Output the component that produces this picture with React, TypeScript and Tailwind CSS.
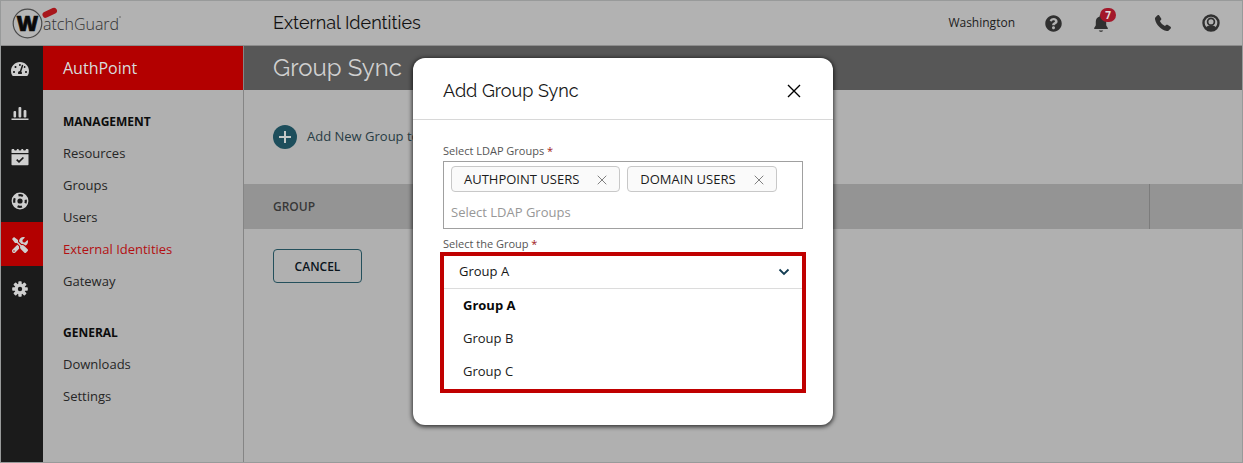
import { useState } from "react";
import type { ReactNode } from "react";
import { FaTachometerAlt, FaQuestionCircle, FaTools } from "react-icons/fa";

function Logo() {
  return (
    <svg viewBox="0 0 116 36" className="h-9 w-[116px]" role="img" aria-label="WatchGuard">
      <circle cx="16.500" cy="18.500" r="14.300" fill="#b6b6b6" stroke="#4a4a4a" strokeWidth="1.200" />
      <text x="5.500" y="26" fontFamily="Open Sans, sans-serif" fontWeight="800" fontSize="21" fill="#0a0a0a" stroke="#0a0a0a" strokeWidth="0.600">
        W
      </text>
      <path d="M34.500 9.800 L43 5.800" stroke="#a8161b" strokeWidth="6" strokeLinecap="round" />
      <text x="32" y="24.500" fontFamily="Open Sans, sans-serif" fontSize="16" fontWeight="300" fill="#333">
        atchGuard
      </text>
      <circle cx="109" cy="12" r="0.700" fill="#4a4a4a" />
    </svg>
  );
}

function BarsIcon() {
  return (
    <svg viewBox="0 0 18 18" className="size-[18px]" fill="currentColor" aria-hidden="true">
      <rect x="0.500" y="14.500" width="17" height="1.500" />
      <rect x="2.500" y="7" width="2.600" height="6.500" rx="1" />
      <rect x="7.500" y="3" width="2.800" height="10.500" rx="1" />
      <rect x="12.600" y="6" width="2.800" height="7.500" rx="1" />
    </svg>
  );
}

function CalendarIcon() {
  return (
    <svg viewBox="0 0 18 18" className="size-[18px]" aria-hidden="true">
      <path
        d="M1.500 1H3a1.500 1.500 0 0 0 3 0h1.500a1.500 1.500 0 0 0 3 0H12a1.500 1.500 0 0 0 3 0h1.500a1 1 0 0 1 1 1v3H.5V2a1 1 0 0 1 1-1z"
        fill="currentColor"
      />
      <path d="M.5 6.300h17V16.500a.8.800 0 0 1-.8.800H1.300a.8.800 0 0 1-.8-.8z" fill="currentColor" />
      <path d="M5.700 11.700l2.300 2.200 4.400-4.400" fill="none" stroke="#1b1b1b" strokeWidth="1.700" />
    </svg>
  );
}

function RingIcon() {
  return (
    <svg viewBox="0 0 18 18" className="size-[18px]" fill="none" aria-hidden="true">
      <circle cx="9" cy="9" r="5.500" stroke="currentColor" strokeWidth="5.800" />
      <circle
        cx="9"
        cy="9"
        r="5.800"
        stroke="#1b1b1b"
        strokeWidth="2.200"
        strokeDasharray="4.600 4.511"
        strokeDashoffset="2.300"
      />
    </svg>
  );
}

function GearIcon() {
  return (
    <svg viewBox="0 0 18 18" className="size-[18px]" aria-hidden="true">
      <g fill="currentColor">
        {[0, 45, 90, 135].map((angle) => (
          <rect key={angle} x="7.300" y="1.200" width="3.400" height="15.600" rx="0.800" transform={`rotate(${angle} 9 9)`} />
        ))}
        <circle cx="9" cy="9" r="5.400" />
      </g>
      <circle cx="9" cy="9" r="2.200" fill="#1b1b1b" />
    </svg>
  );
}

function BellIcon() {
  return (
    <svg viewBox="0 0 18 20" className="h-5 w-[18px]" fill="currentColor" aria-hidden="true">
      <path d="M9 1.500a1.300 1.300 0 0 1 1.300 1.300v.6c2.400.6 3.900 2.600 3.900 5.100v3.800c0 .7 1.600 2 1.600 3v.7H2.200v-.7c0-1 1.600-2.300 1.600-3V8.500c0-2.500 1.500-4.500 3.900-5.100v-.6A1.300 1.300 0 0 1 9 1.500z" />
      <path d="M6.800 17.400h4.400c-.3.900-1.200 1.300-2.200 1.300s-1.900-.4-2.200-1.300z" />
    </svg>
  );
}

function PhoneIcon() {
  return (
    <svg viewBox="0 0 18 18" className="size-[18px]" fill="currentColor" aria-hidden="true">
      <path d="M1.500 3.300 3.600 1.300c.5-.4 1.200-.3 1.600.2l2 3c.3.500.2 1.100-.2 1.500L5.900 7c.9 2 2.900 4 5.100 5.100l1-1.100c.4-.4 1-.5 1.500-.2l3 2c.5.4.6 1.100.2 1.600l-2 2.100c-.5.500-1.200.7-1.900.5C6.900 15.600 2.400 11.100 1 5.200c-.2-.7 0-1.400.5-1.900z" />
    </svg>
  );
}

function UserIcon() {
  return (
    <svg viewBox="0 0 18 18" className="size-[18px]" fill="none" aria-hidden="true">
      <circle cx="9" cy="9" r="7.500" stroke="currentColor" strokeWidth="2.400" />
      <circle cx="9" cy="7.700" r="3.400" stroke="currentColor" strokeWidth="1.700" />
      <path d="M3.600 14.200c1-2.200 3-2.700 5.400-2.700s4.400.5 5.400 2.700L12 16.500H6z" fill="currentColor" />
    </svg>
  );
}

function CrossIcon({ className }: { className: string }) {
  return (
    <svg viewBox="0 0 14 14" className={className} stroke="currentColor" strokeWidth="1.400" aria-hidden="true">
      <path d="M1 1 L13 13 M13 1 L1 13" />
    </svg>
  );
}

const rail: { label: string; icon: ReactNode; active?: boolean }[] = [
  { label: "Dashboard", icon: <FaTachometerAlt className="size-[18px]" /> },
  { label: "Monitor", icon: <BarsIcon /> },
  { label: "Schedule", icon: <CalendarIcon /> },
  { label: "Support", icon: <RingIcon /> },
  { label: "Configure", icon: <FaTools className="size-4" />, active: true },
  { label: "Settings", icon: <GearIcon /> },
];

const menu = [
  { title: "MANAGEMENT", items: ["Resources", "Groups", "Users", "External Identities", "Gateway"] },
  { title: "GENERAL", items: ["Downloads", "Settings"] },
];

const groups = ["Group A", "Group B", "Group C"];

function Header() {
  return (
    <header className="flex h-[45px] items-center border-b border-[#8c8c8c] bg-[#b2b2b2]">
      <a href="#home" className="w-[272px] pl-[10px]">
        <Logo />
      </a>
      <h1 className="grow font-[Raleway,Lato,sans-serif] text-lg font-normal text-[#111]">External Identities</h1>
      <div className="flex items-center pr-[22px] text-[#303030]">
        <span className="mr-[30px] text-[12px] text-[#1c1c1c]">Washington</span>
        <button type="button" aria-label="Help" className="mr-[30px]">
          <FaQuestionCircle className="size-[17px]" />
        </button>
        <button type="button" aria-label="Notifications" className="relative mr-[44px]">
          <BellIcon />
          <span className="absolute -top-[5px] left-2 flex h-[14px] w-4 items-center justify-center rounded-full bg-[#a3182a] text-[10px] font-bold text-[#e0e0e0]">
            7
          </span>
        </button>
        <button type="button" aria-label="Phone" className="mr-[30px]">
          <PhoneIcon />
        </button>
        <button type="button" aria-label="Account">
          <UserIcon />
        </button>
      </div>
    </header>
  );
}

function Sidebar() {
  return (
    <>
      <nav aria-label="Sections" className="flex w-[42px] shrink-0 flex-col bg-[#1b1b1b] text-[#cfcfcf]">
        {rail.map((item) => (
          <button
            key={item.label}
            type="button"
            aria-label={item.label}
            className={`flex h-11 items-center justify-center pt-0.5 pr-1 ${item.active ? "bg-[#b30000]" : ""}`}
          >
            {item.icon}
          </button>
        ))}
      </nav>
      <nav aria-label="AuthPoint" className="w-[201px] shrink-0 border-r border-[#858585] bg-[#b0b0b0]">
        <h2 className="flex h-11 items-center bg-[#b30000] pl-5 text-base text-[#d8dcdc]">AuthPoint</h2>
        <div className="flex flex-col gap-5 pt-4 pl-5">
          {menu.map((section) => (
            <section key={section.title}>
              <h3 className="text-[12px] leading-[31px] font-bold text-[#0c0c0c]">{section.title}</h3>
              <ul>
                {section.items.map((item) => (
                  <li key={item} className="text-[13px] leading-8">
                    <a href="#menu" className={item === "External Identities" ? "text-[#b30f12]" : "text-[#262626]"}>
                      {item}
                    </a>
                  </li>
                ))}
              </ul>
            </section>
          ))}
        </div>
      </nav>
    </>
  );
}

function GroupSync() {
  return (
    <main className="min-w-0 grow bg-[#b0b0b0]">
      <h2 className="flex h-11 items-center bg-[#575757] pl-[29px] font-[Raleway,Lato,sans-serif] text-2xl text-[#d0d0d0]">
        Group Sync
      </h2>
      <button type="button" className="mt-[35px] ml-[29px] flex items-center gap-[10px] text-[13px] text-[#283c44]">
        <svg viewBox="0 0 24 24" className="size-6" aria-hidden="true">
          <circle cx="12" cy="12" r="12" fill="#1d4e5c" />
          <path d="M12 6v12M6 12h12" stroke="#c4c8c8" strokeWidth="2" />
        </svg>
        Add New Group to Sync
      </button>
      <table className="mt-[35px] w-full bg-[#949494] text-left">
        <thead>
          <tr className="h-[45px]">
            <th scope="col" className="pl-[29px] text-[12px] font-semibold text-[#383838]">
              GROUP
            </th>
            <td className="w-[93px] border-l border-[#7c7c7c]" />
          </tr>
        </thead>
      </table>
      <button
        type="button"
        className="mt-5 ml-[29px] h-[34px] min-w-[89px] rounded border border-[#24505c] px-5 pt-px text-[12px] font-semibold text-[#0a141c]"
      >
        CANCEL
      </button>
    </main>
  );
}

function GroupSyncDialog() {
  const [chips, setChips] = useState(["AUTHPOINT USERS", "DOMAIN USERS"]);
  const [selected, setSelected] = useState("Group A");

  return (
    <div
      role="dialog"
      aria-labelledby="dialog-title"
      className="w-full max-w-[420px] rounded-xl bg-white pb-8 shadow-[0_1px_4px_1px_rgba(0,0,0,0.7)]"
    >
      <div className="flex h-[62px] items-center justify-between border-b border-[#d8d8d8] pt-1 pr-8 pl-[30px]">
        <h2 id="dialog-title" className="font-[Raleway,Lato,sans-serif] text-lg text-[#161616]">
          Add Group Sync
        </h2>
        <button type="button" aria-label="Close" className="text-black">
          <CrossIcon className="size-[14px]" />
        </button>
      </div>
      <div className="px-[30px] pt-[21px]">
        <label htmlFor="ldap" className="block h-5 text-[11px] leading-5 text-[#555]">
          Select LDAP Groups <span className="text-[#a01818]">*</span>
        </label>
        <div className="border border-[#a0a0a0] px-[7px] pt-1 pb-[3px]">
          <div className="flex flex-wrap gap-[7px]">
            {chips.map((chip) => (
              <span
                key={chip}
                className="flex h-[26px] items-center rounded border border-[#c8c8c8] bg-[#fafafa] px-3 pt-px text-[13px] text-[#1c1c1c]"
              >
                {chip}
                <button
                  type="button"
                  aria-label={`Remove ${chip}`}
                  className="ml-[18px] text-[#808080]"
                  onClick={() => setChips(chips.filter((c) => c !== chip))}
                >
                  <CrossIcon className="size-[10px]" />
                </button>
              </span>
            ))}
          </div>
          <input
            id="ldap"
            type="text"
            placeholder="Select LDAP Groups"
            className="mt-1.5 block h-[27px] w-full text-[13px] outline-none placeholder:text-[#979797]"
          />
        </div>
        <label htmlFor="group" className="mt-[7px] block h-4 text-[11px] leading-4 text-[#555]">
          Select the Group <span className="text-[#a01818]">*</span>
        </label>
        <div className="-mx-[3px] border-4 border-[#c00000]">
          <div className="grid items-center border-b border-[#dcdcdc]">
            <select
              id="group"
              value={selected}
              onChange={(e) => setSelected(e.target.value)}
              className="col-start-1 row-start-1 h-8 w-full appearance-none bg-transparent pl-[15px] text-[13px] text-[#161616] outline-none"
            >
              {groups.map((group) => (
                <option key={group}>{group}</option>
              ))}
            </select>
            <svg
              viewBox="0 0 12 8"
              className="pointer-events-none col-start-1 row-start-1 mr-3 h-2 w-3 justify-self-end"
              fill="none"
              stroke="#123c52"
              strokeWidth="1.800"
              aria-hidden="true"
            >
              <path d="M1.500 1.500 6 6l4.500-4.500" />
            </svg>
          </div>
          <ul role="listbox" aria-label="Groups" className="pb-px">
            {groups.map((group) => (
              <li key={group} role="option" aria-selected={group === selected}>
                <button
                  type="button"
                  onClick={() => setSelected(group)}
                  className={`block w-full pl-[19px] text-left text-[13px] leading-[33px] ${
                    group === selected ? "font-bold text-[#0a0a0a]" : "text-[#202020]"
                  }`}
                >
                  {group}
                </button>
              </li>
            ))}
          </ul>
        </div>
      </div>
    </div>
  );
}

export default function App() {
  return (
    <div className="relative flex min-h-screen flex-col border border-[#989a9a] bg-[#b0b0b0] font-['Open_Sans',sans-serif]">
      <Header />
      <div className="flex grow">
        <Sidebar />
        <GroupSync />
      </div>
      <div className="absolute inset-0 flex items-start justify-center pt-[57px] pl-[3px]">
        <GroupSyncDialog />
      </div>
    </div>
  );
}
